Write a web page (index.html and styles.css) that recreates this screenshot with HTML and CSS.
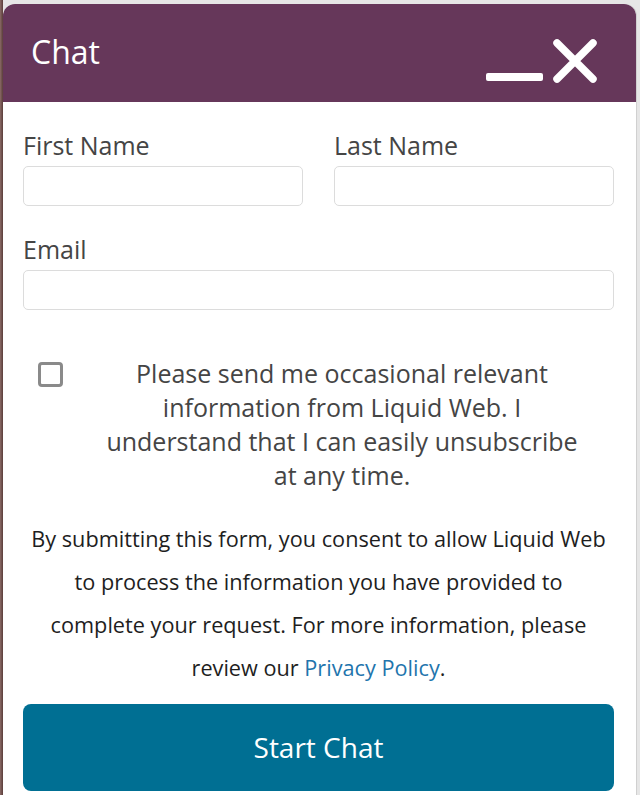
FILE: index.html
```html
<!DOCTYPE html>
<html>
<head>
<meta charset="utf-8">
<link rel="stylesheet" href="styles.css">
</head>
<body>
<div class="widget">
  <div class="header">
    <span class="title">Chat</span>
    <div class="controls">
      <svg class="min" width="60" height="12" viewBox="0 0 60 12"><rect x="2" y="2" width="57" height="8" rx="2" fill="#fff"/></svg>
      <svg class="close" width="50" height="48" viewBox="0 0 50 48"><path d="M7 6 L43 42 M43 6 L7 42" stroke="#fff" stroke-width="7.5" stroke-linecap="round"/></svg>
    </div>
  </div>
  <form class="form">
    <div class="row two">
      <label class="field"><span class="label">First Name</span><input class="input" type="text"></label>
      <label class="field"><span class="label">Last Name</span><input class="input" type="text"></label>
    </div>
    <label class="field email"><span class="label">Email</span><input class="input" type="text"></label>
    <div class="optin">
      <span class="box"></span>
      <p class="optin-text">Please send me occasional relevant<br>information from Liquid Web. I<br>understand that I can easily unsubscribe<br>at any time.</p>
    </div>
    <p class="consent">By submitting this form, you consent to allow Liquid Web<br>to process the information you have provided to<br>complete your request. For more information, please<br>review our <a class="link" href="#">Privacy Policy</a>.</p>
    <button class="start" type="button">Start Chat</button>
  </form>
</div>
</body>
</html>
```
FILE: styles.css
```css
html, body {
  margin: 0;
  padding: 0;
}
body {
  width: 640px;
  height: 795px;
  overflow: hidden;
  background: linear-gradient(to right, #8a6a66 0, #5a3d3a 3px, #e6e6e6 3px);
  font-family: "Open Sans", "Noto Sans", sans-serif;
}
.widget {
  margin: 4px 4px 0 3px;
  width: 633px;
  background: #fff;
  border-radius: 12px 12px 0 0;
  box-shadow: 1px 0 0 #d0d0d0;
  height: 800px;
}
.header {
  height: 98px;
  background: #66375a;
  border-radius: 12px 12px 0 0;
  display: flex;
  align-items: center;
  justify-content: space-between;
  padding: 0 36px 0 28px;
}
.title {
  color: #fff;
  font-size: 32px;
  line-height: 40px;
  margin-top: -2px;
}
.controls {
  display: flex;
  align-items: flex-end;
  gap: 6px;
  margin-top: 16px;
}
.min {
  display: block;
  margin-bottom: 2px;
}
.close {
  display: block;
}
.form {
  padding: 28px 22px 0 20px;
}
.row.two {
  display: grid;
  grid-template-columns: 280px 280px;
  column-gap: 31px;
}
.field {
  display: flex;
  flex-direction: column;
}
.label {
  font-size: 25px;
  line-height: 30px;
  color: #454545;
  margin-bottom: 6px;
}
.input {
  height: 40px;
  box-sizing: border-box;
  border: 1.5px solid #dcdcdc;
  border-radius: 5px;
  background: #fff;
  margin: 0;
  padding: 0 10px;
  font-family: inherit;
}
.email {
  margin-top: 28px;
}
.optin {
  display: flex;
  align-items: flex-start;
  margin-top: 46px;
}
.box {
  flex: none;
  width: 25px;
  height: 25px;
  box-sizing: border-box;
  border: 3px solid #8a8a8a;
  border-radius: 4px;
  margin: 6px 0 0 15px;
}
.optin-text {
  flex: 1;
  margin: 0 0 0 7px;
  text-align: center;
  font-size: 25px;
  line-height: 34px;
  color: #454545;
}
.consent {
  margin: 25px 0 0;
  text-align: center;
  font-size: 21.7px;
  line-height: 43px;
  color: #1e1e1e;
}
.link {
  color: #1f75ad;
  text-decoration: none;
}
.start {
  display: block;
  width: 100%;
  height: 87px;
  margin-top: 15px;
  background: #006f93;
  color: #fff;
  border: 0;
  border-radius: 8px;
  font-family: inherit;
  font-size: 28px;
  padding: 0 0 2px;
}
```
